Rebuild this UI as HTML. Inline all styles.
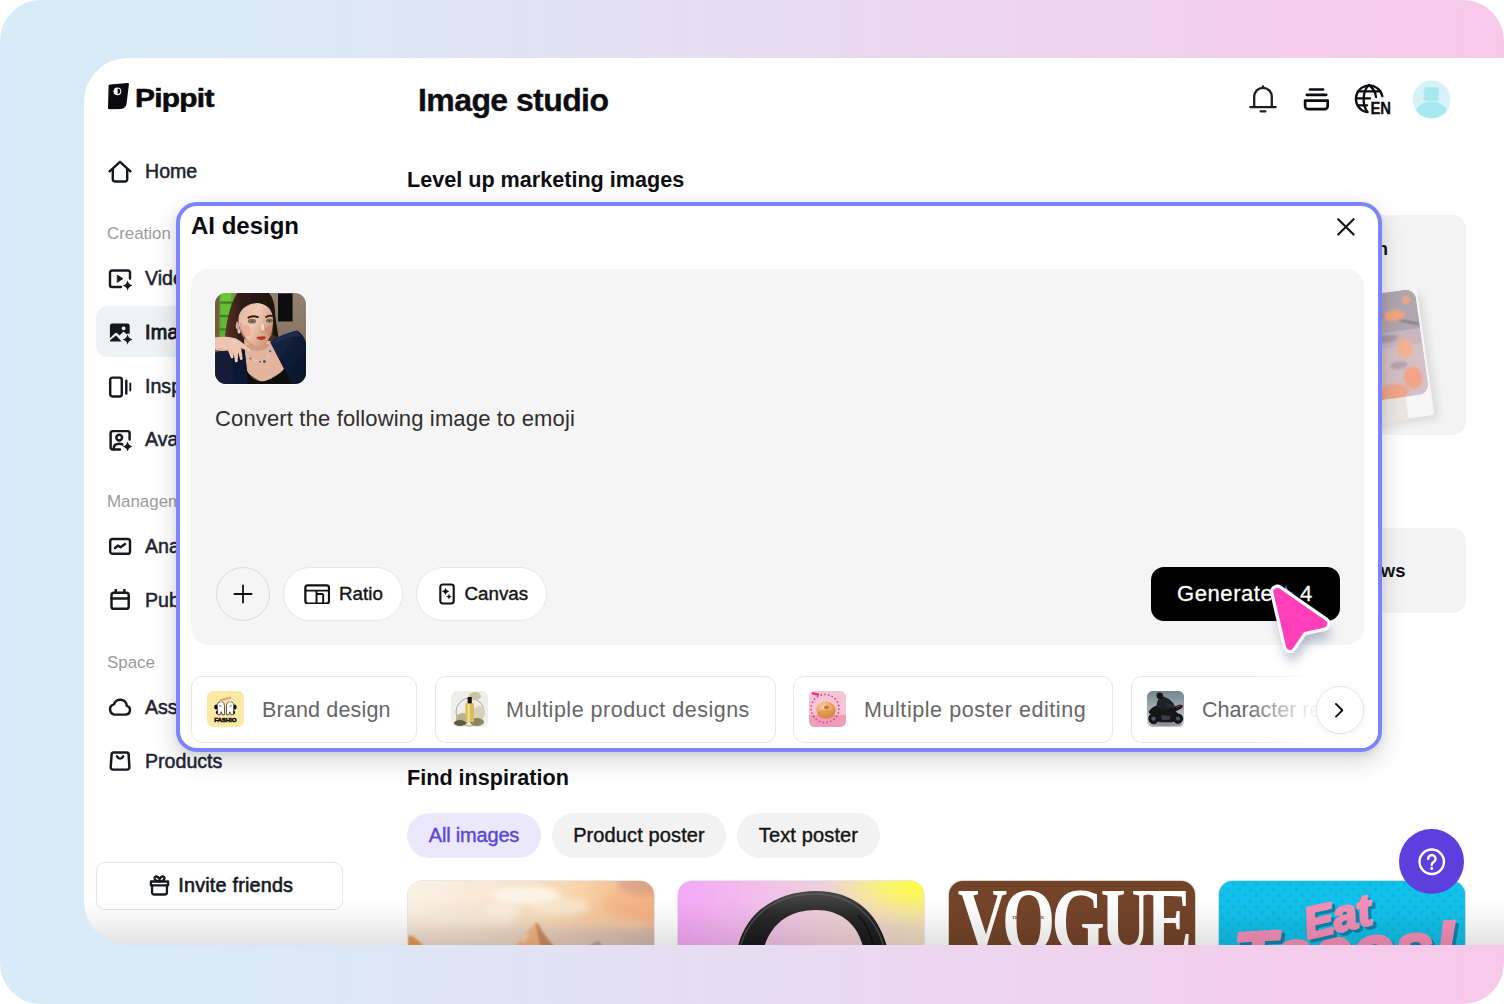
<!DOCTYPE html>
<html lang="en">
<head>
<meta charset="utf-8">
<title>Pippit – Image studio</title>
<style>
*{box-sizing:border-box;margin:0;padding:0}
html,body{width:1504px;height:1004px;overflow:hidden;background:#fff}
body{font-family:"Liberation Sans",sans-serif;color:#111;position:relative}
.abs{position:absolute}
#frame{position:absolute;left:0;top:0;width:1504px;height:1004px;border-radius:41px;overflow:hidden;
 background:linear-gradient(90deg,#d7ecf8 0%,#dde7f5 25%,#e7dcf1 50%,#f0d2ed 75%,#f8c8e8 100%)}
#win{position:absolute;left:84px;top:58px;width:1440px;height:887px;background:#fff;border-radius:44px 0 0 44px;overflow:hidden}
#winfade{position:absolute;left:0;bottom:0;width:100%;height:46px;background:linear-gradient(180deg,rgba(0,0,0,0) 0%,rgba(0,0,0,.03) 35%,rgba(0,0,0,.115) 100%);pointer-events:none}
/* sidebar */
.nav{position:absolute;left:24px;height:24px;margin-top:1px;display:flex;align-items:center;font-size:19.6px;color:#1d2330;-webkit-text-stroke:.5px #1d2330;white-space:nowrap}
.nav svg{width:24px;height:24px;margin-right:13px;flex:none;position:relative;top:.5px}
.sec{position:absolute;left:23px;margin-top:1px;font-size:16.9px;color:#9b9b9b;white-space:nowrap}
#sel{position:absolute;left:12px;top:248.3px;width:200px;height:50.6px;border-radius:12px;background:#eef2f5}
#invite{position:absolute;left:12px;top:803.5px;width:246.5px;height:48.5px;border:1px solid #e2e2e2;border-radius:9px;background:#fff;display:flex;align-items:center;justify-content:center;font-size:19.8px;letter-spacing:.2px;color:#15181f;-webkit-text-stroke:.6px #15181f;padding-left:4px}
/* main */
#title{position:absolute;left:334px;top:21.6px;font-size:32px;font-weight:bold;letter-spacing:-.58px;-webkit-text-stroke:.35px #0e0e12;color:#0e0e12;white-space:nowrap;line-height:40px}
.h2{position:absolute;margin-top:.5px;font-size:21.6px;font-weight:bold;color:#0e0e12;white-space:nowrap;line-height:28px}
.gcard{position:absolute;background:#f3f3f3;border-radius:14px;overflow:hidden}
.pill{position:absolute;top:755px;height:45px;border-radius:23px;background:#f2f2f2;font-size:20px;color:#141414;display:flex;align-items:center;justify-content:center;-webkit-text-stroke:.4px #141414;white-space:nowrap}
.card{position:absolute;top:822px;width:248px;height:120px;border-radius:15px;overflow:hidden;border:1px solid rgba(230,230,230,.9)}
/* modal */
#modal{position:absolute;left:176px;top:202px;width:1206px;height:550px;border:4px solid #7c84fa;border-radius:21px;background:#fff;
 box-shadow:0 9px 24px rgba(0,0,0,.17),0 2px 7px rgba(0,0,0,.08)}
#mtitle{position:absolute;left:11px;top:4px;font-size:24px;font-weight:bold;line-height:32px;color:#0b0b0f;white-space:nowrap}
#area{position:absolute;left:11px;top:62.6px;width:1173px;height:376.6px;border-radius:18px;background:#f5f5f5}
#prompt{position:absolute;left:24px;top:136.4px;font-size:22px;line-height:28px;color:#2e2e2e;white-space:nowrap;letter-spacing:.15px}
.tool{position:absolute;top:298.4px;height:54px;border-radius:27px;background:#fff;border:1px solid #e6e6e6;display:flex;align-items:center;font-size:18.8px;color:#141414;-webkit-text-stroke:.4px #141414;white-space:nowrap}
#gen{position:absolute;left:960px;top:298.4px;width:189px;height:54px;border-radius:13px;background:#000;color:#fff;font-size:21px;-webkit-text-stroke:.3px #fff;white-space:nowrap}
.chip{position:absolute;top:470px;height:67px;border:1px solid #e6e6e6;border-radius:11px;background:#fff;font-size:21.5px;color:#666;white-space:nowrap}
.chip .th{position:absolute;left:15px;top:14.3px;width:37px;height:36px;border-radius:6px;overflow:hidden}
.chip span{position:absolute;top:19px;line-height:28px}
</style>
</head>
<body>
<div id="frame">
 <div id="win">
  <!-- SIDEBAR -->
  <div id="sidebar">
   <!-- logo -->
   <svg class="abs" style="left:24px;top:24px" width="108" height="30" viewBox="0 0 108 30">
    <path d="M2.2 2.4 L19.6 0.9 C20.6 0.8 21.1 1.5 20.9 2.4 L18.6 21.6 C18.2 24.9 16 26.8 12.8 26.9 L1.2 27.3 C0.5 27.3 0 26.8 0 26.1 L0.6 4.1 C0.6 3.1 1.2 2.5 2.2 2.4 Z" fill="#0b0b0f"/>
    <circle cx="9.4" cy="9.3" r="3.9" fill="#fff"/>
    <path d="M9.6 6.6 A2.7 2.7 0 0 1 9.6 12 Z" fill="#0b0b0f"/>
    <text transform="translate(27 24.6) scale(1.17 1)" font-family="Liberation Sans, sans-serif" font-weight="bold" font-size="25.5" letter-spacing="-0.6" fill="#0b0b0f" stroke="#0b0b0f" stroke-width=".55">Pippit</text>
   </svg>
   <div id="sel"></div>
   <div class="nav" style="top:100px"><svg viewBox="0 0 24 24" fill="none" stroke="#15181f" stroke-width="2.45" stroke-linecap="round" stroke-linejoin="round"><path d="M1.6 11.3 L12 1.9 L22.4 11.3"/><path d="M4.8 9.2 V19.3 a2.1 2.1 0 0 0 2.1 2.1 h10.2 a2.1 2.1 0 0 0 2.1-2.1 V9.2"/></svg>Home</div>
   <div class="sec" style="top:165px">Creation</div>
   <div class="nav" style="top:207px"><svg viewBox="0 0 24 24" fill="none" stroke="#15181f" stroke-width="2.45" stroke-linecap="round" stroke-linejoin="round"><path d="M22 11.5 V5.6 a2.1 2.1 0 0 0 -2.1-2.1 H4.1 A2.1 2.1 0 0 0 2 5.6 v12.3 a2.1 2.1 0 0 0 2.1 2.1 H13"/><path d="M9.6 8.3 L14.8 11.7 L9.6 15.1 Z" fill="#15181f" stroke-width="1"/><path d="M19.6 13.2 Q20.4 17.7 24.9 18.5 Q20.4 19.3 19.6 23.8 Q18.8 19.3 14.3 18.5 Q18.8 17.7 19.6 13.2 Z" fill="#15181f" stroke="none"/></svg>Video generator</div>
   <div class="nav" style="top:261px;font-size:19.8px;-webkit-text-stroke:.95px #15181f;letter-spacing:.3px"><svg viewBox="0 0 24 24"><path d="M4.2 2.6 H19.4 a2.3 2.3 0 0 1 2.3 2.3 V13.2 C20.6 12.4 19.4 12.4 18.4 13.3 L16.7 11.4 a1.5 1.5 0 0 0 -2.2 0 L11.6 14.6 L9.1 12.2 a1.5 1.5 0 0 0 -2.1 0 L1.9 17.2 V4.9 A2.3 2.3 0 0 1 4.2 2.6 Z M15.6 5.4 a1.9 1.9 0 1 0 0.01 0 Z" fill="#15181f" fill-rule="evenodd"/><path d="M8 14.6 L13.6 20.4 H2.6 a0.7 0.7 0 0 1 -.5-1.2 Z" fill="#15181f"/><path d="M19.6 13.2 Q20.4 17.7 24.9 18.5 Q20.4 19.3 19.6 23.8 Q18.8 19.3 14.3 18.5 Q18.8 17.7 19.6 13.2 Z" fill="#15181f"/></svg>Image studio</div>
   <div class="nav" style="top:315px"><svg viewBox="0 0 24 24" fill="none" stroke="#15181f" stroke-width="2.45" stroke-linecap="round" stroke-linejoin="round"><rect x="2.2" y="2.6" width="11.6" height="18.8" rx="2.2"/><path d="M18.3 5.6 V18.4"/><path d="M22.3 8.4 V15.6" stroke-width="1.9"/></svg>Inspiration</div>
   <div class="nav" style="top:368px"><svg viewBox="0 0 24 24" fill="none" stroke="#15181f" stroke-width="2.45" stroke-linecap="round" stroke-linejoin="round"><path d="M21.6 11.5 V5.2 a2.1 2.1 0 0 0 -2.1-2.1 H4.7 A2.1 2.1 0 0 0 2.6 5.2 v14.2 a2.1 2.1 0 0 0 2.1 2.1 H12"/><circle cx="11.2" cy="9.6" r="2.9"/><path d="M5.6 21 C5.6 17.6 8 15.8 11.2 15.8 C12.6 15.8 13.6 16 14.4 16.5"/><path d="M19.6 13.2 Q20.4 17.7 24.9 18.5 Q20.4 19.3 19.6 23.8 Q18.8 19.3 14.3 18.5 Q18.8 17.7 19.6 13.2 Z" fill="#15181f" stroke="none"/></svg>Avatars and voices</div>
   <div class="sec" style="top:433px">Management</div>
   <div class="nav" style="top:475px"><svg viewBox="0 0 24 24" fill="none" stroke="#15181f" stroke-width="2.45" stroke-linecap="round" stroke-linejoin="round"><rect x="2.2" y="4" width="19.8" height="14.8" rx="2.4"/><path d="M7 13.2 L9.8 10.6 L12.6 12.2 L17 9"/></svg>Analytics</div>
   <div class="nav" style="top:529px"><svg viewBox="0 0 24 24" fill="none" stroke="#15181f" stroke-width="2.45" stroke-linecap="round" stroke-linejoin="round"><rect x="3.5" y="3.8" width="17.2" height="16" rx="2.4"/><path d="M7.8 0.8 V3.8 M16.4 0.8 V3.8 M3.5 9.4 H20.7"/></svg>Publisher</div>
   <div class="sec" style="top:594px">Space</div>
   <div class="nav" style="top:636px"><svg viewBox="0 0 24 24" fill="none" stroke="#15181f" stroke-width="2.45" stroke-linecap="round" stroke-linejoin="round"><path d="M6.9 18.6 H17.5 a4.5 4.5 0 0 0 1.3 -8.8 A6.6 6.6 0 0 0 5.9 8.4 A5.2 5.2 0 0 0 6.9 18.6 Z"/></svg>Assets</div>
   <div class="nav" style="top:690px"><svg viewBox="0 0 24 24" fill="none" stroke="#15181f" stroke-width="2.45" stroke-linecap="round" stroke-linejoin="round"><path d="M5.6 2.4 H18.6 a2 2 0 0 1 2 2 L21.4 17.2 a2.3 2.3 0 0 1 -2.3 2.4 H5 A2.3 2.3 0 0 1 2.7 17.2 L3.6 4.4 a2 2 0 0 1 2 -2 Z"/><path d="M9 6.4 C9.8 8 10.8 8.6 12.1 8.6 C13.4 8.6 14.4 8 15.2 6.4"/></svg>Products</div>
   <div id="invite"><svg width="21" height="23.5" viewBox="0 0 22 24" fill="none" stroke="#15181f" stroke-width="2.4" stroke-linecap="round" stroke-linejoin="round" style="margin-right:8px;position:relative;top:-1px"><path d="M2 8.6 H20 V12.6 H2 Z"/><path d="M3.2 12.6 V20.2 a2 2 0 0 0 2 2 H16.8 a2 2 0 0 0 2 -2 V12.6"/><path d="M11 8.4 C8.6 8.4 5.8 7.4 5.8 5 C5.8 2.6 9.4 2.6 11 6.2 C12.6 2.6 16.2 2.6 16.2 5 C16.2 7.4 13.4 8.4 11 8.4 Z"/></svg>Invite friends</div>
  </div>
  <!-- MAIN -->
  <div id="main">
   <div id="title">Image studio</div>
   <!-- top-right icons -->
   <svg class="abs" style="left:1164px;top:26px" width="30" height="30" viewBox="0 0 30 30" fill="none" stroke="#1b1d26" stroke-width="2.3" stroke-linecap="round" stroke-linejoin="round"><path d="M2.3 23.1 H27.7"/><path d="M6.2 22.8 V12.6 a8.8 8.8 0 0 1 17.6 0 V22.8"/><path d="M12.6 27.3 H17.4"/><circle cx="15" cy="2.5" r="1.3" fill="#1b1d26" stroke="none"/></svg>
   <svg class="abs" style="left:1218px;top:28px" width="30" height="26" viewBox="0 0 30 26" fill="none" stroke="#0b0b0f" stroke-width="2.7" stroke-linecap="round" stroke-linejoin="round"><path d="M8 3.5 H21"/><path d="M4.8 8.8 H24.2"/><path d="M3.1 14.6 H25.7 V20 a3.2 3.2 0 0 1 -3.2 3.2 H6.3 A3.2 3.2 0 0 1 3.1 20 Z"/></svg>
   <svg class="abs" style="left:1270px;top:25px" width="42" height="34" viewBox="0 0 42 34"><g fill="none" stroke="#0b0b0f" stroke-width="2.3" stroke-linecap="round"><path d="M28.4 13.2 A13.4 13.4 0 1 0 13.6 29.2"/><path d="M15 2 C8.2 8 8.2 22 13.2 28.6"/><path d="M15 2 C19.4 5.4 21.6 9.6 22 14"/><path d="M2 15.4 H16"/><path d="M3.8 8.4 H26.4"/><path d="M3.8 22.4 H13"/></g><text x="16.4" y="31.4" font-family="Liberation Sans, sans-serif" font-weight="bold" font-size="16.8" textLength="20.6" lengthAdjust="spacingAndGlyphs" fill="#0b0b0f" stroke="#0b0b0f" stroke-width=".3">EN</text></svg>
   <svg class="abs" style="left:1328px;top:22px" width="39" height="39" viewBox="0 0 39 39"><defs><clipPath id="avc"><circle cx="19.5" cy="19.5" r="19"/></clipPath></defs><circle cx="19.5" cy="19.5" r="19" fill="#d8f3f8"/><g clip-path="url(#avc)" fill="#a6e8f0"><path d="M13.5 8 H25 L26.5 10 L25.4 12.5 L26.6 15 L25.4 17.5 L26.4 20 H13 L11.8 17.8 L13 15.2 L12 12.6 L13 10.2 Z" stroke="#a6e8f0" stroke-width="1.5" stroke-linejoin="round"/><ellipse cx="19.5" cy="36" rx="17" ry="14.5"/></g></svg>
   <div class="h2" style="left:323px;top:107px">Level up marketing images</div>
   <!-- cards behind the modal -->
   <div class="gcard" style="left:1200px;top:157px;width:182px;height:220px">
    <div class="abs" style="right:78px;top:23px;font-size:18px;font-weight:bold;line-height:22px;white-space:nowrap;color:#111">Batch edit in</div>
    <svg class="abs" style="left:53px;top:65px" width="110" height="160" viewBox="0 0 110 160">
     <defs><clipPath id="fl"><rect x="-30" y="0" width="70" height="106" rx="11"/></clipPath><filter id="blur1"><feGaussianBlur stdDeviation="1.1"/></filter><filter id="blur4"><feGaussianBlur stdDeviation="5"/></filter></defs>
     <g transform="translate(38 14) rotate(-8)">
      <rect x="-26" y="6" width="72" height="126" rx="4" fill="#000" opacity=".10" filter="url(#blur4)"/>
      <rect x="-30" y="0" width="72" height="128" rx="3" fill="#f6f6f6"/>
      <rect x="-30" y="100" width="46" height="30" fill="#eae6e4"/>
      <g clip-path="url(#fl)"><rect x="-30" y="0" width="70" height="106" fill="#c9b6be"/><rect x="-30" y="0" width="70" height="40" fill="#a9a2ad" opacity=".8"/><rect x="-30" y="55" width="70" height="51" fill="#d8c3c8" opacity=".8"/>
       <g filter="url(#blur1)"><path d="M-30 12 L40 36" stroke="#4a4038" stroke-width="1"/><ellipse cx="16" cy="24" rx="11" ry="6" fill="#f0a684"/><ellipse cx="30" cy="10" rx="4" ry="4" fill="#f0a684"/><ellipse cx="-4" cy="32" rx="7" ry="9" fill="#f2a98c"/><ellipse cx="22" cy="58" rx="8" ry="10" fill="#f4b196"/><ellipse cx="26" cy="88" rx="9" ry="11" fill="#f3a386"/><ellipse cx="4" cy="100" rx="16" ry="8" fill="#f0a58a"/><ellipse cx="6" cy="46" rx="10" ry="4" fill="#8f8594" opacity=".55"/><ellipse cx="14" cy="74" rx="9" ry="4" fill="#8f8594" opacity=".45"/><path d="M-30 52 L-8 58 L-22 80 L-30 82 Z" fill="#4b4231"/></g>
      </g>
     </g>
    </svg>
   </div>
   <div class="gcard" style="left:1200px;top:470px;width:182px;height:85px">
    <div class="abs" style="right:60.5px;top:32px;font-size:18.5px;font-weight:bold;line-height:22px;white-space:nowrap;color:#111">Product reviews</div>
   </div>
   <div class="h2" style="left:323px;top:705px">Find inspiration</div>
   <div class="pill" style="left:323px;width:134px;background:#ebe8fb;color:#5a45d8;-webkit-text-stroke:.4px #5a45d8;letter-spacing:-.2px">All images</div>
   <div class="pill" style="left:468px;width:174px;letter-spacing:.12px">Product poster</div>
   <div class="pill" style="left:653px;width:143px;letter-spacing:.14px">Text poster</div>
   <!-- inspiration cards -->
   <div class="card" style="left:323px">
    <svg width="248" height="120" viewBox="0 0 248 120"><defs><linearGradient id="sky" x1="0" y1="0" x2="1" y2=".12"><stop offset="0" stop-color="#f9f1e6"/><stop offset=".35" stop-color="#f8e7d2"/><stop offset=".7" stop-color="#f7d2a8"/><stop offset="1" stop-color="#f4b283"/></linearGradient><linearGradient id="sea" x1="0" y1="0" x2="1" y2="0"><stop offset="0" stop-color="#f3e2d2" stop-opacity=".15"/><stop offset=".55" stop-color="#e3cabd" stop-opacity=".6"/><stop offset="1" stop-color="#cdb3a9" stop-opacity=".95"/></linearGradient><linearGradient id="haze" x1="0" y1="0" x2="0" y2="1"><stop offset="0" stop-color="#f0d6c4" stop-opacity="0"/><stop offset="1" stop-color="#ecd0c0" stop-opacity=".95"/></linearGradient><filter id="b3"><feGaussianBlur stdDeviation="3.2"/></filter><filter id="b1"><feGaussianBlur stdDeviation=".9"/></filter></defs>
     <rect width="248" height="120" fill="url(#sky)"/>
     <g filter="url(#b3)"><ellipse cx="118" cy="14" rx="34" ry="9" fill="#fdf6ea" opacity=".95"/><ellipse cx="150" cy="26" rx="30" ry="9" fill="#fbe9d2" opacity=".9"/><ellipse cx="95" cy="30" rx="18" ry="6" fill="#fdf3e4" opacity=".8"/><ellipse cx="50" cy="40" rx="60" ry="6" fill="#fbefdc" opacity=".8"/><ellipse cx="220" cy="22" rx="28" ry="12" fill="#f3ad7c" opacity=".45"/><ellipse cx="200" cy="46" rx="40" ry="7" fill="#f6c9a0" opacity=".7"/></g>
     <rect y="34" width="248" height="40" fill="url(#haze)"/><rect x="-10" y="47" width="270" height="40" fill="url(#sea)" filter="url(#b3)"/><ellipse cx="236" cy="2" rx="26" ry="12" fill="#c99486" opacity=".55" filter="url(#b3)"/>
     <g filter="url(#b1)"><path d="M104 70 L112 60 L118 52 L124 46 L128 41 L131 44 L134 50 L140 58 L150 70 Z" fill="#f2b482"/><path d="M128 41 L131 44 L134 50 L140 58 L150 70 L134 70 L130 56 Z" fill="#c98a62"/><path d="M112 60 L118 52 L122 54 L116 62 Z" fill="#f7cda4"/><path d="M176 70 L184 63 L190 60 L193 63 L198 70 Z" fill="#b99a94"/><path d="M0 54 L6 56 L14 63 L18 70 L0 70 Z" fill="#e59a52"/></g>
    </svg>
   </div>
   <div class="card" style="left:593px">
    <svg width="248" height="120" viewBox="0 0 248 120"><defs><linearGradient id="hp" x1="0" y1="0" x2="1" y2="0"><stop offset="0" stop-color="#f5a6f6"/><stop offset=".3" stop-color="#f2bdec"/><stop offset=".6" stop-color="#efd0da"/><stop offset="1" stop-color="#f3dcc0"/></linearGradient><radialGradient id="hy" cx="1" cy="0" r=".42"><stop offset="0" stop-color="#ffff2e"/><stop offset=".45" stop-color="#fbf56a" stop-opacity=".85"/><stop offset="1" stop-color="#f8ee9a" stop-opacity="0"/></radialGradient><linearGradient id="band" x1="0" y1="0" x2="0" y2="1"><stop offset="0" stop-color="#4c4c4c"/><stop offset=".4" stop-color="#2a2a2a"/><stop offset="1" stop-color="#151515"/></linearGradient></defs>
     <rect width="248" height="120" fill="url(#hp)"/><rect width="248" height="120" fill="url(#hy)"/>
     <path d="M59 70 C66 32 98 10 138 10 C178 10 202 34 210 70 L186 70 C181 44 164 29 138 29 C112 29 92 42 85 70 Z" fill="url(#band)"/>
     <path d="M62 66 C72 30 102 13 138 13 C172 13 197 34 206 66" fill="none" stroke="#5e5e5e" stroke-width="1.4" opacity=".8"/>
     <path d="M180 34 C190 44 194 56 197 70" fill="none" stroke="#090909" stroke-width="1.6" opacity=".7"/>
    </svg>
   </div>
   <div class="card" style="left:864px;background:#74442a">
    <div class="abs" style="left:-41px;top:-10px;width:330px;text-align:center;font-family:'Liberation Serif',serif;font-weight:bold;font-size:90px;line-height:100px;color:#fff;letter-spacing:-5px;transform:scaleX(.76);transform-origin:50% 50%;white-space:nowrap">VOGUE</div>
    <div class="abs" style="left:63px;top:34px;font-family:'Liberation Serif',serif;font-size:4px;line-height:5px;color:#74442a;font-weight:bold;letter-spacing:.2px">TRENDSETTER</div>
   </div>
   <div class="card" style="left:1134px;background:#12c1ea">
    <svg width="248" height="120" viewBox="0 0 248 120"><defs><pattern id="dots" width="11.4" height="11.4" patternUnits="userSpaceOnUse"><circle cx="3" cy="3" r="1.8" fill="#0aa4d0" opacity=".42"/><circle cx="8.7" cy="8.7" r="1.8" fill="#0aa4d0" opacity=".42"/></pattern></defs>
     <rect width="248" height="120" fill="#12c1ea"/><rect width="248" height="120" fill="url(#dots)"/>
     <g transform="rotate(-3.2 20 92)" font-family="Liberation Sans, sans-serif" font-style="italic" font-weight="bold">
      <text x="19" y="104" font-size="70" fill="#0b86ad" stroke="#0b86ad" stroke-width="3" stroke-linejoin="round" letter-spacing="0">Tacos!</text>
      <text x="16" y="100.5" font-size="70" fill="#f590b8" stroke="#f590b8" stroke-width="3" stroke-linejoin="round" letter-spacing="0">Tacos!</text>
     </g>
     <g transform="rotate(-13 120 40)" font-family="Liberation Sans, sans-serif" font-style="italic" font-weight="bold">
      <text x="88" y="54" font-size="44" fill="#0b86ad" stroke="#0b86ad" stroke-width="2.6" stroke-linejoin="round" letter-spacing="0">Eat</text>
      <text x="85" y="50.5" font-size="44" fill="#f590b8" stroke="#f590b8" stroke-width="2.6" stroke-linejoin="round" letter-spacing="0">Eat</text>
     </g>
    </svg>
   </div>
   <!-- help -->
   <div class="abs" style="left:1315.2px;top:771.2px;width:65px;height:65px;border-radius:50%;background:#5c3fdc;z-index:3">
    <svg class="abs" style="left:18px;top:18px" width="29.5" height="29.5" viewBox="0 0 28 28" fill="none" stroke="#fff" stroke-width="2.3" stroke-linecap="round" stroke-linejoin="round"><circle cx="14" cy="14" r="11.6"/><path d="M10.6 11.2 a3.5 3.5 0 1 1 5.4 2.9 c-1.3 .9 -2 1.5 -2 3"/><circle cx="14" cy="20.4" r=".7" fill="#fff" stroke-width="1.4"/></svg>
   </div>
  </div>
  <div id="winfade"></div>
 </div>
 <!-- MODAL -->
 <div id="modal">
  <div id="mtitle">AI design</div>
  <svg class="abs" style="left:1155px;top:9.6px" width="22" height="22" viewBox="0 0 22 22" fill="none" stroke="#111" stroke-width="2.1" stroke-linecap="round"><path d="M3.2 3.2 L18.6 18.6 M18.6 3.2 L3.2 18.6"/></svg>
  <div id="area">
   <!-- uploaded photo -->
   <div class="abs" style="left:23px;top:23.4px;width:93px;height:93px;border-radius:12px;background:#fff"></div>
   <svg class="abs" style="left:24px;top:24.4px;border-radius:11px" width="91" height="91" viewBox="0 0 91 91">
    <defs><filter id="pb"><feGaussianBlur stdDeviation=".55"/></filter><filter id="pb2"><feGaussianBlur stdDeviation="1.4"/></filter>
     <linearGradient id="skin" x1="0" y1="0" x2="1" y2=".6"><stop offset="0" stop-color="#e2b29a"/><stop offset=".5" stop-color="#f0cbb6"/><stop offset="1" stop-color="#cf957c"/></linearGradient>
     <linearGradient id="bgw" x1="0" y1="0" x2="0" y2="1"><stop offset="0" stop-color="#93806e"/><stop offset="1" stop-color="#7d6958"/></linearGradient>
     <linearGradient id="jk" x1="0" y1="0" x2="1" y2="1"><stop offset="0" stop-color="#182a4a"/><stop offset=".5" stop-color="#101c34"/><stop offset="1" stop-color="#0a1224"/></linearGradient>
     <linearGradient id="hairg" x1="0" y1="0" x2="1" y2="0"><stop offset="0" stop-color="#5a3424"/><stop offset=".35" stop-color="#2e1c15"/><stop offset="1" stop-color="#1b120e"/></linearGradient></defs>
    <rect width="91" height="91" fill="url(#bgw)"/>
    <g filter="url(#pb)">
     <rect x="-2" y="-2" width="7" height="62" fill="#7a5a3e"/>
     <rect x="4.4" y="-2" width="14" height="47" fill="#58b030"/>
     <rect x="6" y="0" width="10" height="8" fill="#6cc63a"/><rect x="6" y="11.5" width="10" height="10" fill="#66c038"/><rect x="6.5" y="25" width="9" height="10" fill="#62b83a"/><rect x="7" y="38" width="7" height="6" fill="#5cb436"/>
     <rect x="4.4" y="8.6" width="14" height="2" fill="#477c26"/><rect x="4.4" y="22" width="14" height="2" fill="#477c26"/><rect x="4.4" y="35.4" width="14" height="2" fill="#477c26"/>
     <rect x="63" y="0.4" width="14.6" height="28" fill="#0d0d10"/>
     <!-- hair back -->
     <path d="M10 46 C11 30 15 12 21 2 L24 -2 H52 C57 2 60 10 60 20 C61 30 63 40 64 47 L58 50 L20 52 Z" fill="url(#hairg)"/>
     <path d="M55 40 C58 42 62 44 65 45 L60 52 L54 50 Z" fill="#4a2c1e"/>
     <!-- neck & chest -->
     <path d="M29 46 L56 48 L70 77 L48 90 L31 79 Z" fill="#e4b59c"/>
     <path d="M30 52 C34 58 42 60 50 56 L56 52 L46 50 Z" fill="#c99680" opacity=".8"/>
     <!-- face -->
     <path d="M23.5 28 C23 17 30 9.6 41 10 C52 10 58.4 17 58 28 C58 36 56 44 52 49 C49 53 45 54.4 42 53.6 C36 52 30 46 26.6 39 C24.6 35 23.6 32 23.5 28 Z" fill="url(#skin)"/>
     <path d="M19.6 30 C19.6 27.6 22.6 27.6 23.6 30 L25 38 C22.6 38.6 20 34 19.6 30 Z" fill="#dca48c"/>
     <!-- hair front part line -->
     <path d="M21 4 C30 -1 50 -1 57 6 C58.6 10 59.4 16 59.4 22 C57 16 53 12 46 10.6 C44 6 42 5 41 10.2 C33 10.6 26 15 23 24 C21 30 20 38 15.6 45 L10 46 C12 30 15 14 21 4 Z" fill="url(#hairg)"/>
     <!-- jacket right -->
     <path d="M55 49 C62 44 74 39 82 37.6 C87 40 90 46 92 52 V92 H76 L69 76 Z" fill="url(#jk)"/>
     <path d="M60 47 C67 43 76 39.6 82 38.4 L86 43 C78 43 68 46 62 50 Z" fill="#27406a" opacity=".4"/>
     <!-- jacket left -->
     <path d="M-1 60 L8 57 L20 58 L29.6 56 L32 78 L33.6 92 H-1 Z" fill="#121f38"/>
     <path d="M17 60 L18 92 H33.6 L32 78 L29.6 58 Z" fill="#0e1930"/>
     <!-- black top -->
     <path d="M31.6 77 C36 86 44 89.6 50 88 C58 86 65 81 69.4 75.6 L77 92 H33 Z" fill="#08080c"/>
     <!-- hand -->
     <path d="M-1 44.6 C6 43.4 15 43.6 21 45.6 C26 48 31 52.6 34.6 56.6 C34 57.8 32.6 57.6 31 57 L25.6 54.6 C26.6 58 27.6 62 27.4 66 C26.6 67.4 25.4 67 25 66 L23 59 C23.2 62 23 66 22.4 68.6 C21.6 69.8 20.4 69.4 20 68.4 L18.6 60.6 C18.6 62.6 18.4 64 17.6 65 C16.6 65.6 15.8 65 15.6 64 L13 57.6 C9 58.6 4 58 -1 56 Z" fill="#efc5b0"/>
     <path d="M3 55.6 C7 57.2 11 57.4 13.4 57" stroke="#c99078" stroke-width=".8" fill="none"/>
     <circle cx="11.4" cy="51" r="1.5" fill="#c9ccd6"/><circle cx="19.4" cy="48.8" r="1.7" fill="#d5d8e2"/>
     <circle cx="17.4" cy="64.2" r=".9" fill="#f4ece8"/><circle cx="21.6" cy="68" r=".9" fill="#f4ece8"/><circle cx="26.4" cy="65.6" r=".9" fill="#f4ece8"/><circle cx="34" cy="56.6" r=".8" fill="#f4ece8"/>
     <!-- features -->
     <ellipse cx="31" cy="38" rx="5" ry="6" fill="#d9876c" opacity=".35"/><ellipse cx="54.6" cy="38" rx="3.4" ry="6" fill="#c97a60" opacity=".4"/><path d="M26 30 C25 40 30 48 38 52" stroke="#c98e76" stroke-width="2.4" fill="none" opacity=".5"/><path d="M32.6 25 C36 22.8 40 23 43.6 24.4" stroke="#2e1a14" stroke-width="1.9" fill="none"/>
     <path d="M50.4 24.4 C53 22.6 56 22.4 58 23.4" stroke="#2e1a14" stroke-width="1.8" fill="none"/>
     <ellipse cx="37" cy="28.2" rx="4.2" ry="2.4" fill="#7e3e2a" opacity=".7"/><ellipse cx="54.4" cy="27.6" rx="3.4" ry="2.2" fill="#7e3e2a" opacity=".7"/>
     <ellipse cx="37.2" cy="28.4" rx="2.2" ry="1.3" fill="#4f8f96"/><ellipse cx="54.4" cy="27.8" rx="2" ry="1.2" fill="#4f8f96"/>
     <circle cx="37.4" cy="28.4" r=".7" fill="#14100e"/><circle cx="54.4" cy="27.8" r=".7" fill="#14100e"/>
     <path d="M48 30 C49.6 33 51.4 36 50.6 38 C49.6 39.4 47 39.2 45.6 38.4" stroke="#c98e78" stroke-width="1" fill="none"/>
     <ellipse cx="47.6" cy="34" rx="1.6" ry="3.4" fill="#fae4d8" opacity=".8"/>
     <path d="M41.4 44.6 C43.6 42.8 46 43.6 47 43.4 C48.6 42.8 50 43.4 50.8 44.4 C49.4 47.6 44.4 48.4 41.4 44.6 Z" fill="#c7402f"/>
     <path d="M41.6 44.7 C45 45.2 48 45 50.6 44.5" stroke="#7e2018" stroke-width=".6" fill="none"/>
     <ellipse cx="24" cy="38.6" rx="1.5" ry="2" fill="#cfd2da"/>
     <!-- necklace -->
     <path d="M31 61.6 C36 66.6 43 69 49 68.4 C52.6 66 54.6 62 55.4 57.6" stroke="#d8c8c0" stroke-width=".7" fill="none"/>
     <circle cx="35.6" cy="65.4" r="1" fill="#5d6b86"/><circle cx="40.6" cy="67.8" r="1" fill="#d8dae6"/><circle cx="45" cy="68.8" r="1" fill="#5d6b86"/><circle cx="49.4" cy="68.6" r="1.4" fill="#3d4a66"/><circle cx="53.4" cy="63.6" r=".9" fill="#d8dae6"/><circle cx="55.2" cy="58.2" r="1.1" fill="#5d6b86"/>
    </g>
   </svg>
   <div id="prompt">Convert the following image to emoji</div>
   <div class="tool" style="left:24.5px;width:54px;background:#f5f5f5;border-color:#dadada;justify-content:center"><svg width="22" height="22" viewBox="0 0 22 22" fill="none" stroke="#111" stroke-width="1.8" stroke-linecap="round"><path d="M11 2.4 V19.6 M2.4 11 H19.6"/></svg></div>
   <div class="tool" style="left:92px;width:120px;padding-left:20px"><svg width="26.4" height="20.8" viewBox="0 0 27 22" preserveAspectRatio="none" fill="none" stroke="#111" stroke-width="2.3" stroke-linejoin="round" style="margin-right:8.6px"><rect x="1.4" y="1.4" width="24.2" height="19.2" rx="2.6"/><path d="M1.4 7 H25.6 M12.8 7 V20.6 M19.6 10.6 V20.6 M12.8 10.6 H19.6" stroke-width="2"/></svg>Ratio</div>
   <div class="tool" style="left:225px;width:131px;padding-left:22px"><svg width="16" height="22" viewBox="0 0 16 22" style="margin-right:9.5px"><rect x="1.3" y="1.5" width="13.4" height="19" rx="2.4" fill="none" stroke="#111" stroke-width="2.1"/><path d="M6.6 4.6 Q7.2 7.8 10.4 8.4 Q7.2 9 6.6 12.2 Q6 9 2.8 8.4 Q6 7.8 6.6 4.6 Z M10 10.8 Q10.4 13.2 12.8 13.6 Q10.4 14 10 16.4 Q9.6 14 7.2 13.6 Q9.6 13.2 10 10.8 Z" fill="#111"/></svg>Canvas</div>
   <div id="gen"><span class="abs" style="left:26px;top:13px;line-height:28px;font-size:22px;letter-spacing:.58px">Generate</span>
    <svg class="abs" style="left:126px;top:17px" width="18" height="18" viewBox="0 0 18 18"><path d="M9 0 C9.8 6 12 8.2 18 9 C12 9.8 9.8 12 9 18 C8.2 12 6 9.8 0 9 C6 8.2 8.2 6 9 0 Z" fill="#6a6cf6"/></svg>
    <span class="abs" style="left:149px;top:13px;line-height:28px;font-size:22px">4</span></div>
  </div>
  <!-- suggestion chips -->
  <div id="chips" class="abs" style="left:0;top:0;width:1198px;height:542px;overflow:hidden;border-radius:17px">
   <div class="chip" style="left:11px;width:226px"><div class="th" style="background:#fde9a6">
     <svg width="37" height="36" viewBox="0 0 37 36"><defs><filter id="cb0"><feGaussianBlur stdDeviation=".3"/></filter></defs><g filter="url(#cb0)"><g fill="#111"><ellipse cx="9.2" cy="16" rx="2.1" ry="2.6"/><ellipse cx="27.6" cy="16" rx="2.1" ry="2.6"/><ellipse cx="10.4" cy="21.4" rx="1.5" ry="1.8"/><ellipse cx="26.6" cy="21.4" rx="1.5" ry="1.8"/></g><g fill="#fff" stroke="#111" stroke-width=".7" stroke-linejoin="round"><path d="M10.2 14.4 C10.2 11.6 12 10.8 13.8 10.8 C15.8 10.8 17.4 11.8 17.4 14.4 L17.6 23.6 L15.2 23.9 L14.2 20.8 L13 23.9 L10.6 23.6 Z"/><path d="M19.6 14.4 C19.6 11.8 21.2 10.8 23.2 10.8 C25 10.8 26.8 11.6 26.8 14.4 L26.4 23.6 L24 23.9 L22.8 20.8 L21.8 23.9 L19.4 23.6 Z"/></g><path d="M14.4 9 V11.6 M22.8 8 V11.4" stroke="#dfe6ee" stroke-width="1.6"/><path d="M13.2 8.2 L23.4 5.6 C24.6 5.4 25 7.4 23.8 7.8 L13.8 10.4 C12.6 10.6 12.2 8.6 13.2 8.2 Z" fill="#e8a95e"/><path d="M12.2 14.6 L14.6 15.4 M24.8 14.6 L22.6 15.4" stroke="#222" stroke-width=".7"/></g><text x="18.3" y="30.6" text-anchor="middle" font-family="Liberation Sans, sans-serif" font-weight="bold" font-size="6.1" fill="#111" stroke="#111" stroke-width=".55" letter-spacing="-.1">FASHIO</text></svg>
    </div><span style="left:70px;letter-spacing:.17px">Brand design</span></div>
   <div class="chip" style="left:255px;width:341px"><div class="th" style="background:#eeeeea">
     <svg width="37" height="36" viewBox="0 0 37 36"><defs><filter id="cb"><feGaussianBlur stdDeviation=".5"/></filter></defs><g filter="url(#cb)"><circle cx="19" cy="21" r="14" fill="none" stroke="#8f8a74" stroke-width=".7"/><ellipse cx="24" cy="5" rx="6" ry="4" fill="#c9c3a0"/><ellipse cx="28" cy="22" rx="6" ry="7" fill="#d8d3b8"/><ellipse cx="12" cy="28" rx="7" ry="6" fill="#b9b18a"/><ellipse cx="26" cy="31" rx="7" ry="4" fill="#8c845c"/><rect x="14.4" y="12" width="8.6" height="19" rx="1" fill="#d9bf5a"/><rect x="16.6" y="12" width="2" height="19" fill="#f2e3a0"/><rect x="16.6" y="6" width="4.2" height="6.4" fill="#15140f"/><ellipse cx="9" cy="32" rx="6" ry="3" fill="#5e5a3c"/></g></svg>
    </div><span style="left:70px;letter-spacing:.5px">Multiple product designs</span></div>
   <div class="chip" style="left:613px;width:320px"><div class="th" style="background:#f6c3d2">
     <svg width="37" height="36" viewBox="0 0 37 36"><defs><filter id="cb2"><feGaussianBlur stdDeviation=".45"/></filter><radialGradient id="dn" cx=".4" cy=".35" r=".7"><stop offset="0" stop-color="#f9d9a8"/><stop offset=".6" stop-color="#e9a45a"/><stop offset="1" stop-color="#c97a34"/></radialGradient></defs><rect width="37" height="36" fill="#f7c6d6"/><rect y="24" width="37" height="12" fill="#ee9dba"/><g filter="url(#cb2)"><circle cx="16" cy="17.5" r="14" fill="none" stroke="#e8338a" stroke-width="1.5" stroke-dasharray="1.6 2.2"/><ellipse cx="17" cy="19" rx="9.6" ry="8.6" fill="url(#dn)"/><ellipse cx="17" cy="23" rx="9" ry="4.4" fill="#d88a4a" opacity=".6"/><ellipse cx="17.6" cy="16.4" rx="2.6" ry="1.8" fill="#c5793c"/><path d="M3 1 L10 2.4 L9.6 5 L3 3.6 Z" fill="#e8338a"/></g></svg>
    </div><span style="left:70px;letter-spacing:.57px">Multiple poster editing</span></div>
   <div class="chip" style="left:951px;width:300px"><div class="th" style="background:#9aa7ad">
     <svg width="37" height="36" viewBox="0 0 37 36"><defs><filter id="cb3"><feGaussianBlur stdDeviation=".4"/></filter><linearGradient id="mg" x1="0" y1="0" x2="0" y2="1"><stop offset="0" stop-color="#74858e"/><stop offset=".6" stop-color="#a9b5ba"/><stop offset=".82" stop-color="#d5dadb"/><stop offset="1" stop-color="#b8c0c2"/></linearGradient></defs><rect width="37" height="36" fill="url(#mg)"/><g filter="url(#cb3)"><ellipse cx="19" cy="33.4" rx="16" ry="1.6" fill="#6f7a7e" opacity=".7"/><g fill="#121417"><circle cx="6.6" cy="27.6" r="5.4"/><circle cx="31" cy="27.6" r="5.2"/><path d="M1.6 21 C5 15.6 10 13.6 15 14.6 L24 17 L33 13.6 L36 14.6 L35 17 L28.6 20.4 L33 24 L26 31.6 H11.6 L9 23.6 L3 23 Z"/><path d="M9.6 14.6 C10 9 12.6 5.6 16.6 5.6 L22.6 8.6 L27 13 L26.6 16.6 L20 19 L12 18.6 Z" fill="#1d2126"/><circle cx="12.8" cy="4.8" r="3.3"/><path d="M20 12 L28 14.6 L27.4 16.4 L19.6 15 Z" fill="#2a2f36"/></g><circle cx="6.6" cy="27.6" r="2.2" fill="#50585c"/><circle cx="31" cy="27.6" r="2.1" fill="#50585c"/><path d="M14 24 L24 25 L22 29 H15 Z" fill="#3a4046"/><path d="M29 16.6 L34.6 14.4" stroke="#c44" stroke-width=".8"/></g></svg>
    </div><span style="left:70px">Character replacement</span></div>
   <div class="abs" style="left:1066px;top:462px;width:132px;height:80px;background:linear-gradient(90deg,rgba(255,255,255,0) 0%,rgba(255,255,255,.45) 22%,rgba(255,255,255,.9) 48%,#fff 66%)"></div>
   <div class="abs" style="left:1136px;top:480px;width:48px;height:48px;border-radius:50%;background:#fff;border:1px solid #e4e4e4;box-shadow:0 1px 6px rgba(0,0,0,.06)"><svg class="abs" style="left:12px;top:12px" width="20" height="22" viewBox="0 0 20 22" fill="none" stroke="#111" stroke-width="1.9" stroke-linecap="round" stroke-linejoin="round"><path d="M7 5 L13.4 11.3 L7 17.6"/></svg></div>
  </div>
 </div>
 <!-- CURSOR -->
 <svg class="abs" style="left:1250px;top:565px;z-index:9" width="110" height="120" viewBox="0 0 110 120">
  <defs><filter id="cs" x="-40%" y="-40%" width="180%" height="180%"><feGaussianBlur stdDeviation="6"/></filter></defs>
  <path d="M27.3 26.9 L73.2 58.8 L51.5 63.5 L40 80.8 Z" fill="#34406e" stroke="#34406e" stroke-width="12" stroke-linejoin="round" opacity=".34" filter="url(#cs)" transform="translate(2 9)"/>
  <path d="M27.3 26.9 L73.2 58.8 L51.5 63.5 L40 80.8 Z" fill="#fff" stroke="#fff" stroke-width="14.6" stroke-linejoin="round"/>
  <path d="M27.3 26.9 L73.2 58.8 L51.5 63.5 L40 80.8 Z" fill="#ff3fb9" stroke="#ff3fb9" stroke-width="8" stroke-linejoin="round"/>
 </svg>

</div>
</body>
</html>
